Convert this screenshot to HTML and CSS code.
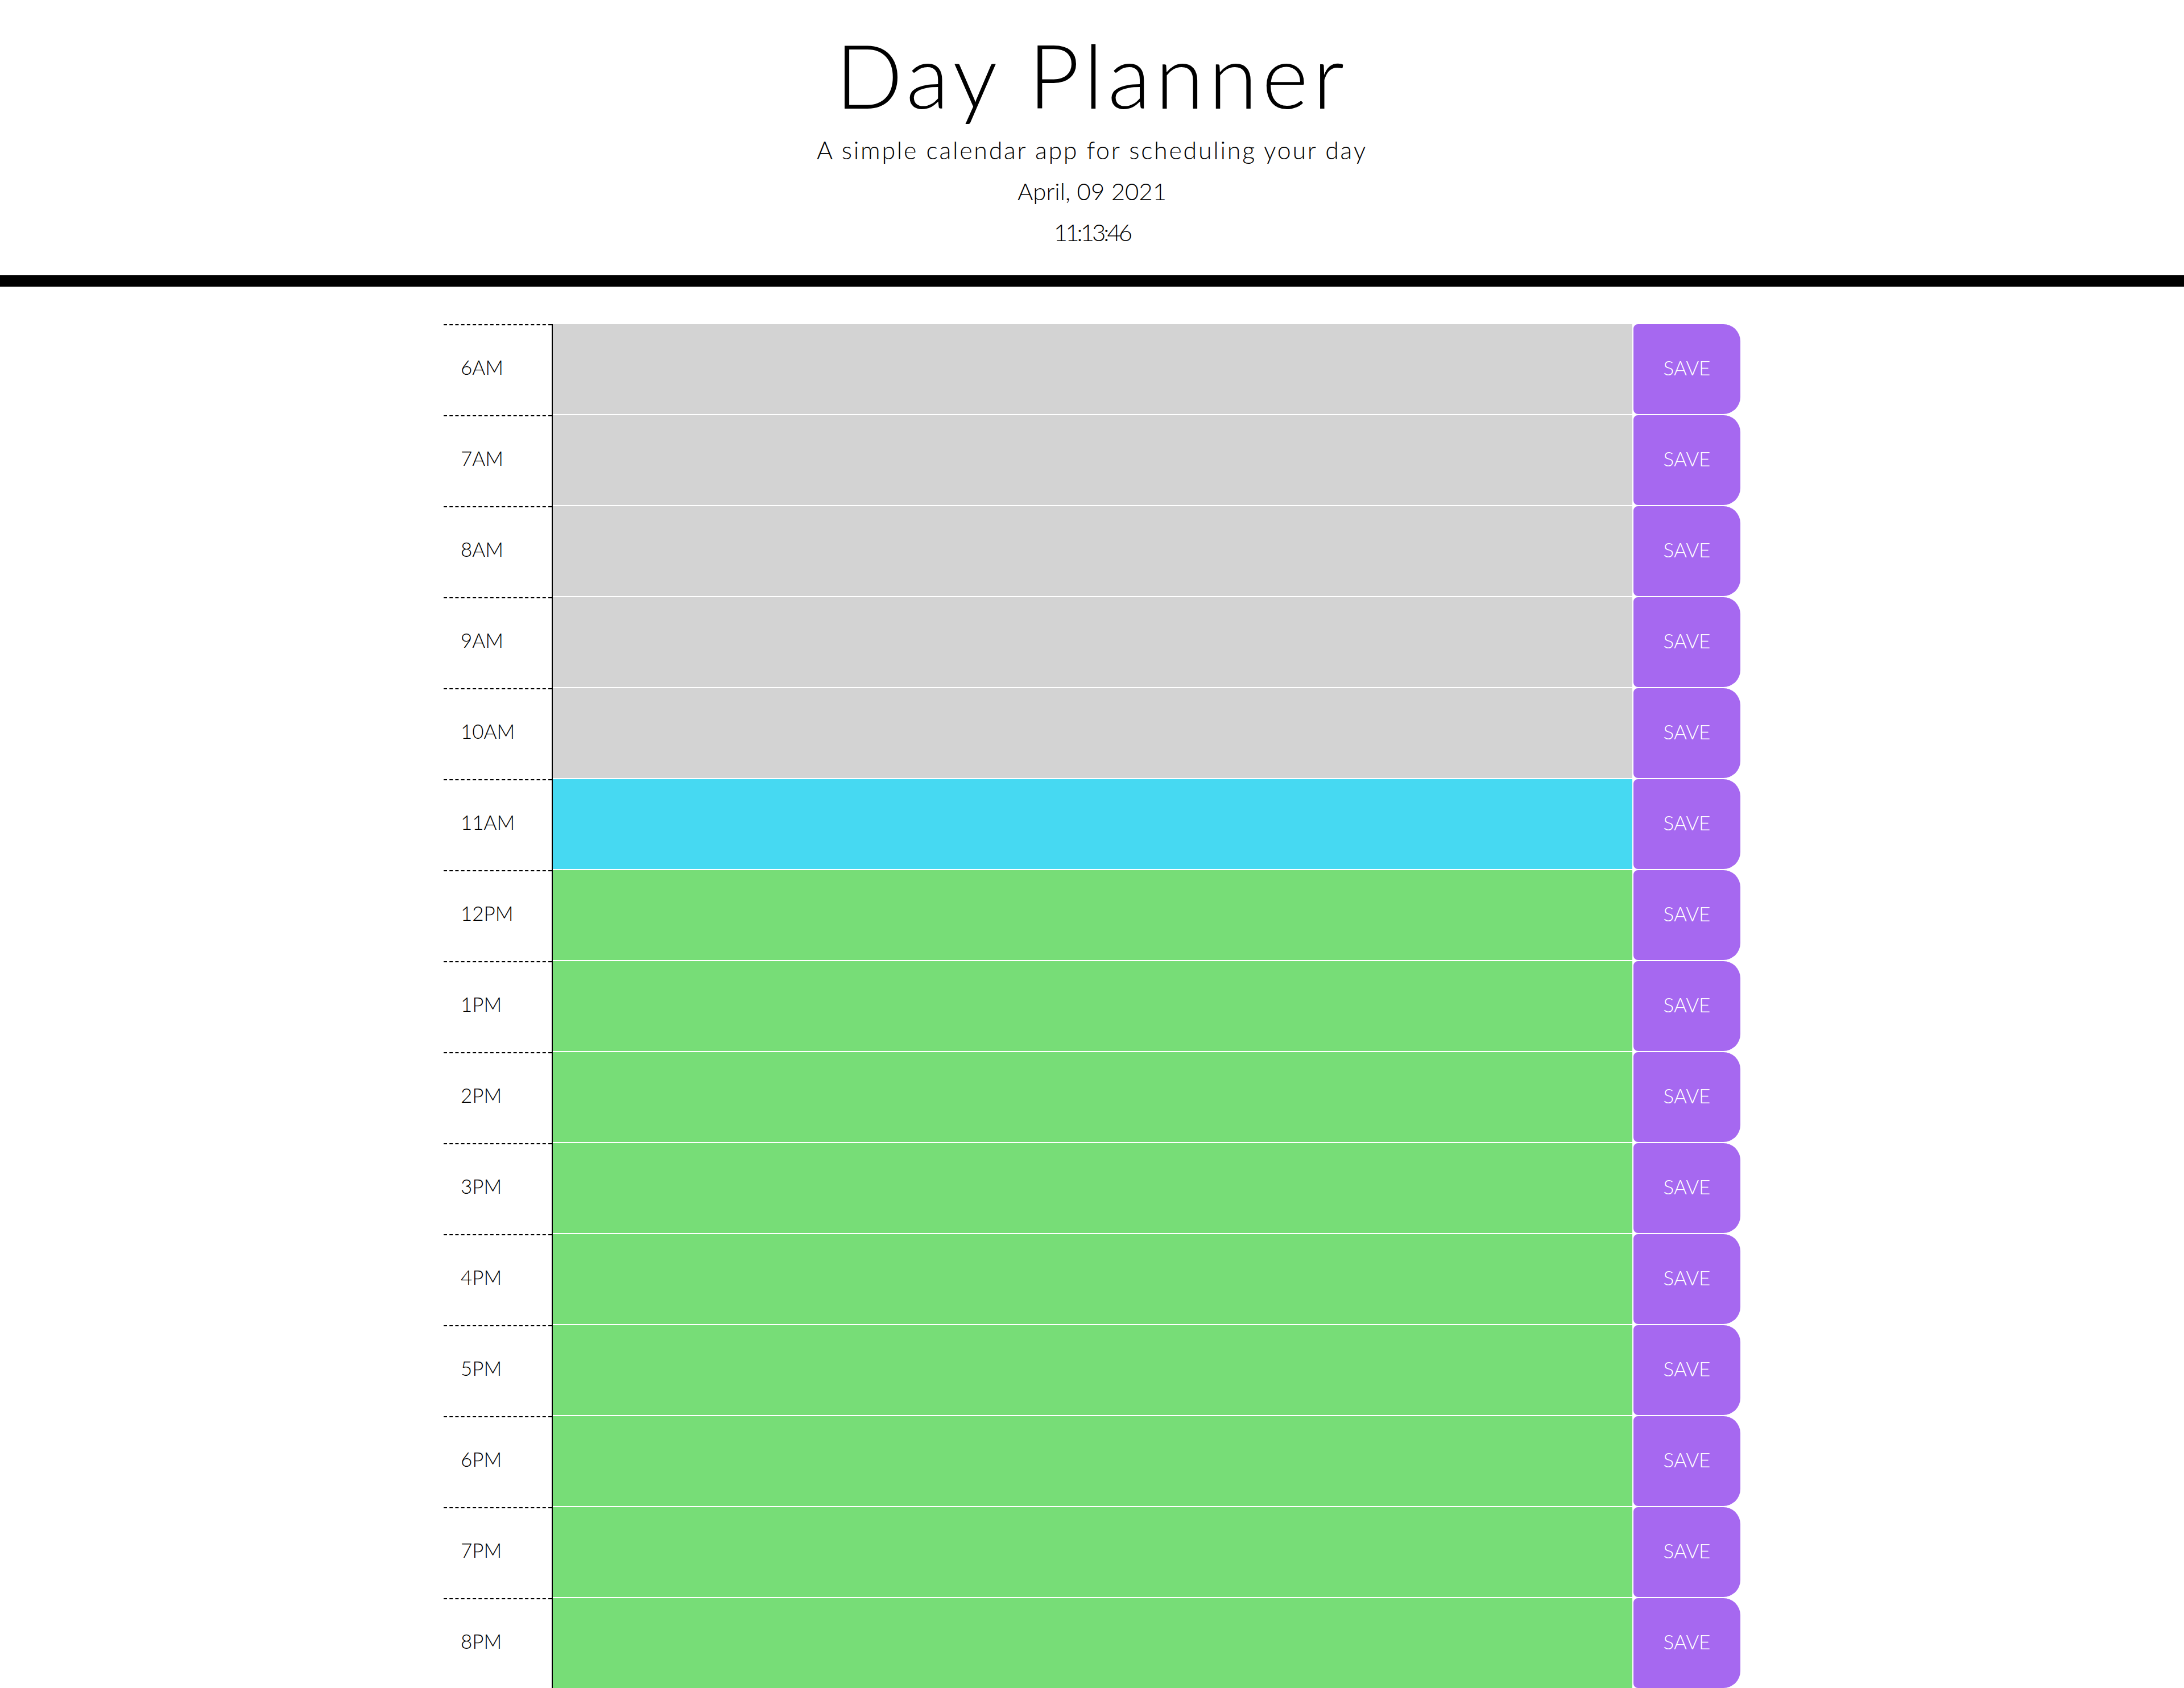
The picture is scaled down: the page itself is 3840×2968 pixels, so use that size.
FILE: index.html
```html
<!DOCTYPE html>
<html lang="en">
<head>
<meta charset="utf-8">
<title>Day Planner</title>
<link rel="stylesheet" href="styles.css">
</head>
<body>
<header class="jumbotron">
  <h1 class="title">Day Planner</h1>
  <p class="lead">A simple calendar app for scheduling your day</p>
  <p class="date">April, 09 2021</p>
  <p class="time">11:13:46</p>
</header>
<main class="container">
  <div class="time-block"><div class="hour">6AM</div><textarea class="description past"></textarea><button class="save-btn">SAVE</button></div>
  <div class="time-block"><div class="hour">7AM</div><textarea class="description past"></textarea><button class="save-btn">SAVE</button></div>
  <div class="time-block"><div class="hour">8AM</div><textarea class="description past"></textarea><button class="save-btn">SAVE</button></div>
  <div class="time-block"><div class="hour">9AM</div><textarea class="description past"></textarea><button class="save-btn">SAVE</button></div>
  <div class="time-block"><div class="hour">10AM</div><textarea class="description past"></textarea><button class="save-btn">SAVE</button></div>
  <div class="time-block"><div class="hour">11AM</div><textarea class="description present"></textarea><button class="save-btn">SAVE</button></div>
  <div class="time-block"><div class="hour">12PM</div><textarea class="description future"></textarea><button class="save-btn">SAVE</button></div>
  <div class="time-block"><div class="hour">1PM</div><textarea class="description future"></textarea><button class="save-btn">SAVE</button></div>
  <div class="time-block"><div class="hour">2PM</div><textarea class="description future"></textarea><button class="save-btn">SAVE</button></div>
  <div class="time-block"><div class="hour">3PM</div><textarea class="description future"></textarea><button class="save-btn">SAVE</button></div>
  <div class="time-block"><div class="hour">4PM</div><textarea class="description future"></textarea><button class="save-btn">SAVE</button></div>
  <div class="time-block"><div class="hour">5PM</div><textarea class="description future"></textarea><button class="save-btn">SAVE</button></div>
  <div class="time-block"><div class="hour">6PM</div><textarea class="description future"></textarea><button class="save-btn">SAVE</button></div>
  <div class="time-block"><div class="hour">7PM</div><textarea class="description future"></textarea><button class="save-btn">SAVE</button></div>
  <div class="time-block"><div class="hour">8PM</div><textarea class="description future"></textarea><button class="save-btn">SAVE</button></div>
</main>
</body>
</html>
```
FILE: styles.css
```css
* {
  box-sizing: border-box;
}

html, body {
  margin: 0;
  padding: 0;
  background: #ffffff;
  color: #000000;
  font-family: "Lato", "Open Sans", sans-serif;
  font-weight: 300;
}

.jumbotron {
  text-align: center;
  padding: 37px 0 40px;
  border-bottom: 20px solid #000000;
}

.title {
  margin: 0 0 4px;
  font-size: 156px;
  line-height: 187px;
  font-weight: 300;
  letter-spacing: 8px;
}

.lead,
.date,
.time {
  margin: 0;
  line-height: 72px;
}

.lead {
  font-size: 43px;
  letter-spacing: 2.7px;
}

.date,
.time {
  font-size: 42px;
}

.time {
  letter-spacing: -4px;
}

.container {
  width: 2280px;
  margin: 66px auto 0;
  display: flex;
  flex-direction: column;
}

.time-block {
  display: flex;
  height: 160px;
}

.hour {
  width: 190px;
  flex: none;
  border-top: 2px dashed #000000;
  padding: 0 0 12px 30px;
  display: flex;
  align-items: center;
  font-size: 35px;
  color: #000000;
}

.description {
  width: 1900px;
  flex: none;
  height: 160px;
  margin: 0;
  border: none;
  border-left: 2px solid #000000;
  box-shadow: inset 0 -2px 0 #ffffff;
  resize: none;
  padding: 20px;
  font-family: inherit;
  font-size: 35px;
  outline: none;
}

.past {
  background-color: #d3d3d3;
}

.present {
  background-color: #46d9f2;
}

.future {
  background-color: #77dd77;
}

.save-btn {
  width: 188px;
  flex: none;
  height: 158px;
  margin: 0 0 0 2px;
  border: none;
  border-radius: 8px 30px 30px 8px;
  background-color: #a668f0;
  color: #ffffff;
  font-family: inherit;
  font-weight: 300;
  font-size: 35px;
  padding: 0 0 6px;
}
```
